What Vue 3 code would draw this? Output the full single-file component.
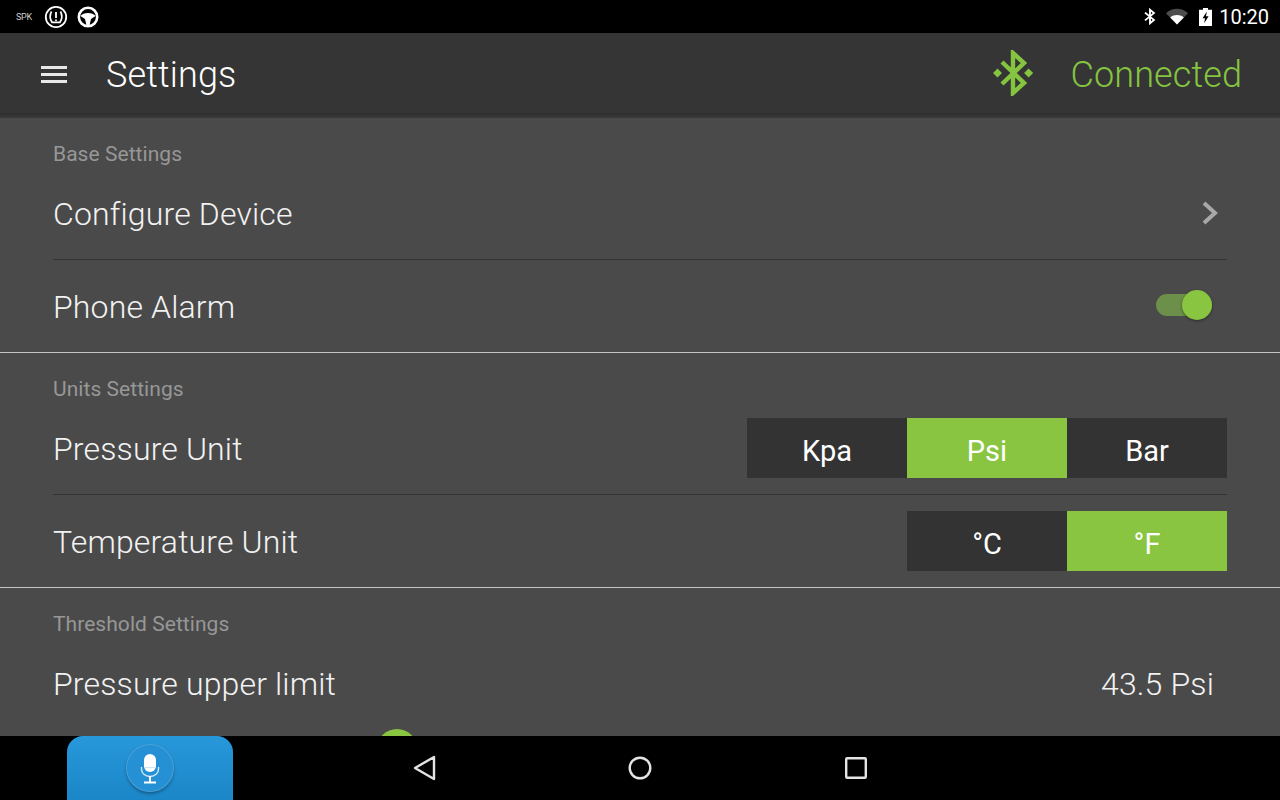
<script setup>
  import { ref } from "vue"

  const pressureUnits = ["Kpa", "Psi", "Bar"]
  const temperatureUnits = ["°C", "°F"]
  const pressureUnit = ref("Psi")
  const temperatureUnit = ref("°F")
  const phoneAlarm = ref(true)
</script>

<template>
  <div class="screen">
    <div class="status-bar">
      <div class="status-left">
        <span class="spk">SPK</span>
        <svg width="24" height="24" viewBox="0 0 24 24" fill="none" stroke="#fff">
          <circle cx="12" cy="12" r="10.2" stroke-width="1.8" />
          <path d="M7.5 6.5C5.6 10 6.2 14.5 8 17.3H16C17.8 14.5 18.4 10 16.5 6.5" stroke-width="1.7" />
          <path d="M12 7V13M12 14.4V16" stroke-width="1.8" />
        </svg>
        <svg width="22" height="22" viewBox="0 0 22 22">
          <circle cx="11" cy="11" r="9.2" fill="none" stroke="#fff" stroke-width="2.6" />
          <path d="M3.5 10C6 6 16 6 18.5 10L14 13L12.6 19H9.4L8 13Z" fill="#fff" />
        </svg>
      </div>
      <div class="status-right">
        <svg width="12" height="17" viewBox="0 0 12 20" preserveAspectRatio="none" fill="none" stroke="#fff" stroke-width="1.9">
          <path d="M1 5.5L10 14L6 18V2L10 6L1 14.5" />
        </svg>
        <svg width="24" height="17" viewBox="0 0 24 17">
          <path d="M1 5.2C7.5 -0.6 16.5 -0.6 23 5.2L12 16.5Z" fill="#fff" fill-opacity="0.3" />
          <path d="M5.2 9.5C9.3 6.3 14.7 6.3 18.8 9.5L12 16.5Z" fill="#fff" />
        </svg>
        <svg class="battery" width="13" height="18" viewBox="0 0 13 20" preserveAspectRatio="none">
          <path d="M4 0H9V2H13V20H0V2H4Z" fill="#fff" />
          <path d="M7.8 4L3.6 11.5H6L5.2 17L9.6 9.2H7Z" fill="#000" />
        </svg>
        <span class="clock">10:20</span>
      </div>
    </div>

    <header class="toolbar">
      <div class="menu-icon"><span></span><span></span><span></span></div>
      <h1 class="title">Settings</h1>
      <svg class="bt-icon" width="42" height="46" viewBox="0 0 42 46">
        <path d="M10 12L32 33L21 43V3L32 13L10 34" fill="none" stroke="#85c440" stroke-width="4.4" />
        <path d="M5.5 18.5L10 23L5.5 27.5L1 23ZM36.6 18.5L41.1 23L36.6 27.5L32.1 23Z" fill="#85c440" />
      </svg>
      <span class="connection">Connected</span>
    </header>
    <div class="toolbar-shadow"></div>

    <main class="content">
      <section class="group">
        <div class="group-title">Base Settings</div>
        <div class="row">
          <span>Configure Device</span>
          <svg class="chevron" width="18" height="26" viewBox="0 0 18 26" fill="none" stroke="#a8a8a8" stroke-width="4">
            <path d="M3 3L14 13L3 23" />
          </svg>
        </div>
        <div class="row">
          <span>Phone Alarm</span>
          <button class="switch" :class="{ on: phoneAlarm }" @click="phoneAlarm = !phoneAlarm">
            <span class="thumb"></span>
          </button>
        </div>
      </section>

      <section class="group">
        <div class="group-title">Units Settings</div>
        <div class="row">
          <span>Pressure Unit</span>
          <div class="segments">
            <button
              v-for="unit in pressureUnits"
              :key="unit"
              class="segment"
              :class="{ active: pressureUnit === unit }"
              @click="pressureUnit = unit"
            >{{ unit }}</button>
          </div>
        </div>
        <div class="row">
          <span>Temperature Unit</span>
          <div class="segments">
            <button
              v-for="unit in temperatureUnits"
              :key="unit"
              class="segment"
              :class="{ active: temperatureUnit === unit }"
              @click="temperatureUnit = unit"
            >{{ unit }}</button>
          </div>
        </div>
      </section>

      <section class="group">
        <div class="group-title">Threshold Settings</div>
        <div class="row limit">
          <span>Pressure upper limit</span>
          <span class="value">43.5 Psi</span>
        </div>
        <div class="slider-row">
          <span class="slider-thumb"></span>
        </div>
      </section>
    </main>

    <nav class="nav-bar">
      <div class="voice-tab">
        <div class="voice-button">
          <svg width="20" height="32" viewBox="0 0 20 32">
            <rect x="4" y="2" width="12" height="18" rx="6" fill="#fff" />
            <path d="M1.5 15V17C1.5 21 5 24.5 10 24.5C15 24.5 18.5 21 18.5 17V15" fill="none" stroke="#fff" stroke-opacity="0.8" stroke-width="1.4" />
            <path d="M4 15.5H16" stroke="#cfe6f6" stroke-width="1" />
            <path d="M10 24V30" stroke="#fff" stroke-width="2" />
            <path d="M4 30.5H16" stroke="#fff" stroke-width="2" />
          </svg>
        </div>
      </div>
      <svg class="nav-back" width="26" height="28" viewBox="0 0 26 28" fill="none" stroke="#e4e4e4" stroke-width="2.4" stroke-linejoin="round">
        <path d="M22 3V25L3 14Z" />
      </svg>
      <svg class="nav-home" width="26" height="26" viewBox="0 0 26 26" fill="none" stroke="#e4e4e4" stroke-width="2.4">
        <circle cx="13" cy="13" r="10.3" />
      </svg>
      <svg class="nav-recent" width="26" height="26" viewBox="0 0 26 26" fill="none" stroke="#e4e4e4" stroke-width="2.4" stroke-linejoin="round">
        <rect x="3.2" y="3.2" width="19.6" height="19.6" rx="1" />
      </svg>
    </nav>
  </div>
</template>

<style scoped>
  .screen {
    width: 1280px;
    height: 800px;
    display: flex;
    flex-direction: column;
    overflow: hidden;
    background: #000;
    font-family: Roboto, "Liberation Sans", sans-serif;
    color: #fff;
  }

  .status-bar {
    height: 33px;
    flex: none;
    display: flex;
    align-items: center;
    justify-content: space-between;
    padding: 0 11px 0 16px;
    background: #000;
  }

  .status-left,
  .status-right {
    display: flex;
    align-items: center;
  }

  .status-left {
    gap: 9px;
  }

  .spk {
    width: 19px;
    font-size: 9px;
    color: #cfcfcf;
    letter-spacing: -0.3px;
  }

  .status-right {
    gap: 9px;
  }

  .battery {
    margin-left: 1px;
  }

  .clock {
    margin-left: -2px;
    font-size: 20px;
    line-height: 1;
  }

  .toolbar {
    height: 80px;
    flex: none;
    display: flex;
    align-items: center;
    padding: 0 38px 0 41px;
    background: #353535;
  }

  .toolbar-shadow {
    height: 5px;
    flex: none;
    background: linear-gradient(#2e2e2e, #3a3a3a);
  }

  .menu-icon {
    width: 26px;
    display: flex;
    flex-direction: column;
    gap: 4px;
    margin: 3px 39px 0 0;
  }

  .menu-icon span {
    height: 3px;
    background: #e8e8e8;
  }

  .title {
    flex: 1;
    margin: 0;
    padding-top: 3px;
    font-size: 36px;
    font-weight: 300;
    letter-spacing: 0.15px;
  }

  .bt-icon {
    margin-right: 37px;
  }

  .connection {
    padding-top: 4px;
    font-size: 36px;
    font-weight: 300;
    letter-spacing: 0.1px;
    color: #85c440;
  }

  .content {
    flex: 1;
    min-height: 0;
    overflow: hidden;
    background: #4a4a4a;
  }

  .group {
    border-bottom: 1px solid #c4c4c4;
  }

  .group:last-child {
    border-bottom: 0;
  }

  .group-title {
    height: 49px;
    box-sizing: border-box;
    padding: 25px 53px 0;
    font-size: 21px;
    line-height: 22px;
    letter-spacing: 0.05px;
    color: #979797;
  }

  .row {
    height: 92px;
    margin: 0 53px;
    display: flex;
    align-items: center;
    justify-content: space-between;
    font-size: 32px;
    font-weight: 300;
    letter-spacing: 0.15px;
    color: #f2f2f2;
  }

  .row > span {
    padding-top: 2px;
  }

  .row + .row {
    border-top: 1px solid #333;
  }

  .chevron {
    margin-right: 8px;
  }

  .switch {
    position: relative;
    width: 56px;
    height: 22px;
    padding: 0;
    margin: 0 15px 2px 0;
    border: 0;
    border-radius: 11px;
    background: #6c8f4a;
  }

  .thumb {
    position: absolute;
    top: -4px;
    right: 0;
    width: 30px;
    height: 30px;
    border-radius: 50%;
    background: #89c540;
    box-shadow: 0 1px 3px rgba(0, 0, 0, 0.4);
  }

  .segments {
    display: flex;
  }

  .segment {
    width: 160px;
    height: 60px;
    padding: 6px 0 0;
    border: 0;
    background: #333;
    color: #fff;
    font: 400 29px Roboto, "Liberation Sans", sans-serif;
  }

  .segment.active {
    background: #89c540;
  }

  .value {
    margin-right: 13px;
  }

  .slider-row {
    position: relative;
    height: 60px;
  }

  .slider-thumb {
    position: absolute;
    top: 0;
    left: 377px;
    width: 40px;
    height: 40px;
    border-radius: 50%;
    background: #89c540;
  }

  .nav-bar {
    position: relative;
    height: 64px;
    flex: none;
    display: flex;
    align-items: center;
    background: #000;
  }

  .voice-tab {
    width: 166px;
    height: 64px;
    margin-left: 67px;
    display: flex;
    align-items: center;
    justify-content: center;
    border-radius: 16px 16px 0 0;
    background: linear-gradient(#2798da, #1b86c8);
  }

  .voice-button {
    width: 46px;
    height: 46px;
    display: flex;
    align-items: center;
    justify-content: center;
    border: 1px solid rgba(255, 255, 255, 0.16);
    border-radius: 50%;
    background: #2590d3;
    box-shadow: 0 2px 3px rgba(0, 0, 0, 0.3);
  }

  .nav-back {
    margin-left: 179px;
  }

  .nav-home {
    margin-left: 189px;
  }

  .nav-recent {
    margin-left: 190px;
  }
</style>

<style>
  body {
    background: #000;
  }
</style>
